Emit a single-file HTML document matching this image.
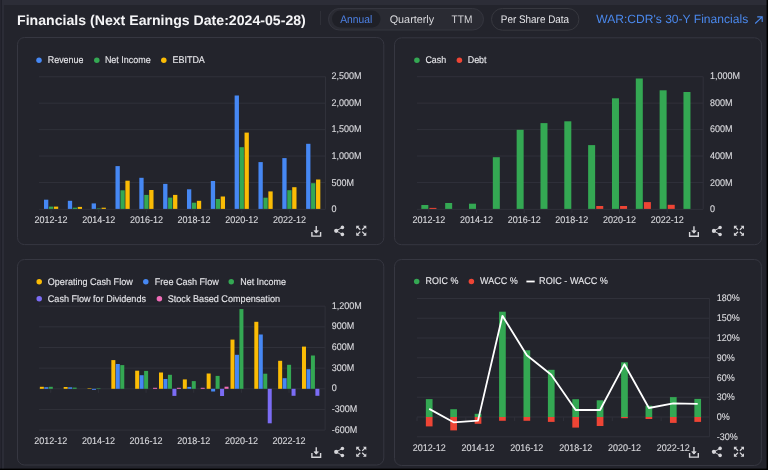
<!DOCTYPE html>
<html><head><meta charset="utf-8"><style>
html,body{margin:0;padding:0;width:768px;height:470px;overflow:hidden;background:#23242c;font-family:"Liberation Sans",sans-serif;}
</style></head><body>
<svg width="768" height="470" viewBox="0 0 768 470" style="position:absolute;left:0;top:0;will-change:transform" font-family="Liberation Sans, sans-serif" text-rendering="geometricPrecision">
<rect x="0.00" y="0.00" width="768.00" height="470.00" fill="#23242c"/>
<rect x="0.00" y="0.00" width="1.00" height="470.00" fill="#25252f"/>
<rect x="1.00" y="0.00" width="1.00" height="470.00" fill="#1f2029"/>
<rect x="2.00" y="0.00" width="765.00" height="5.00" fill="#2c2d37"/>
<rect x="2.00" y="5.00" width="2.00" height="465.00" fill="#2b2c36"/>
<rect x="766.60" y="0.00" width="1.40" height="470.00" fill="#000000"/>
<rect x="0.00" y="468.60" width="768.00" height="1.40" fill="#000000"/>
<text x="17.00" y="25.30" font-size="14" fill="#f4f4f6" text-anchor="start" font-weight="bold" textLength="288.8" lengthAdjust="spacingAndGlyphs">Financials (Next Earnings Date:2024-05-28)</text>
<line x1="320.50" y1="11.00" x2="320.50" y2="25.00" stroke="#2f3038" stroke-width="1"/>
<rect x="328.5" y="8.5" width="155" height="21.5" rx="10.75" fill="#2a2b33" stroke="#35363f" stroke-width="1"/>
<rect x="332" y="10.6" width="48.5" height="16.8" rx="8.4" fill="#1f2027"/>
<text x="340.20" y="22.50" font-size="11" fill="#4d80e4" text-anchor="start" font-weight="normal" textLength="32" lengthAdjust="spacingAndGlyphs">Annual</text>
<text x="389.70" y="22.50" font-size="11" fill="#d8d8dc" text-anchor="start" font-weight="normal" textLength="44.5" lengthAdjust="spacingAndGlyphs">Quarterly</text>
<text x="451.60" y="22.50" font-size="11" fill="#d8d8dc" text-anchor="start" font-weight="normal" textLength="20.8" lengthAdjust="spacingAndGlyphs">TTM</text>
<rect x="491.5" y="8.5" width="87.4" height="21.7" rx="10.85" fill="none" stroke="#37383f" stroke-width="1"/>
<text x="500.80" y="22.50" font-size="11" fill="#e4e4e8" text-anchor="start" font-weight="normal" textLength="68.3" lengthAdjust="spacingAndGlyphs">Per Share Data</text>
<text x="596.20" y="23.00" font-size="12" fill="#4a88ec" text-anchor="start" font-weight="normal" textLength="152" lengthAdjust="spacingAndGlyphs">WAR:CDR's 30-Y Financials</text>
<path d="M755.2 23.5 L762.2 16.9 M757.2 16.9 H762.2 V21.9" fill="none" stroke="#4a88ec" stroke-width="1.1"/>
<rect x="17.5" y="37.5" width="366.3" height="207.1" rx="7" fill="#23242c" stroke="#363741" stroke-width="1"/>
<rect x="394.5" y="37.8" width="367.1" height="206.9" rx="7" fill="#23242c" stroke="#363741" stroke-width="1"/>
<rect x="17.5" y="259.5" width="366.3" height="205.5" rx="7" fill="#23242c" stroke="#363741" stroke-width="1"/>
<rect x="394.5" y="259.5" width="366.9" height="206" rx="7" fill="#23242c" stroke="#363741" stroke-width="1"/>
<circle cx="39" cy="60.2" r="2.75" fill="#4688f4"/>
<text transform="translate(47.80,63.00) scale(0.9168,1)" x="0" y="0" font-size="9.7" fill="#e6e6ea" text-anchor="start" font-weight="normal" stroke="#e6e6ea" stroke-width="0.12">Revenue</text>
<circle cx="96.8" cy="60.2" r="2.75" fill="#34a853"/>
<text transform="translate(104.90,63.00) scale(0.9234,1)" x="0" y="0" font-size="9.7" fill="#e6e6ea" text-anchor="start" font-weight="normal" stroke="#e6e6ea" stroke-width="0.12">Net Income</text>
<circle cx="163.8" cy="60.2" r="2.75" fill="#fbbc05"/>
<text transform="translate(172.40,63.00) scale(0.9278,1)" x="0" y="0" font-size="9.7" fill="#e6e6ea" text-anchor="start" font-weight="normal" stroke="#e6e6ea" stroke-width="0.12">EBITDA</text>
<line x1="39.00" y1="76.75" x2="325.50" y2="76.75" stroke="#30313a" stroke-width="1"/>
<text transform="translate(331.50,79.25) scale(0.9278,1)" x="0" y="0" font-size="9.7" fill="#dadade" text-anchor="start" font-weight="normal" stroke="#dadade" stroke-width="0.12">2,500M</text>
<line x1="39.00" y1="103.18" x2="325.50" y2="103.18" stroke="#30313a" stroke-width="1"/>
<text transform="translate(331.50,105.83) scale(0.9278,1)" x="0" y="0" font-size="9.7" fill="#dadade" text-anchor="start" font-weight="normal" stroke="#dadade" stroke-width="0.12">2,000M</text>
<line x1="39.00" y1="129.61" x2="325.50" y2="129.61" stroke="#30313a" stroke-width="1"/>
<text transform="translate(331.50,132.41) scale(0.9278,1)" x="0" y="0" font-size="9.7" fill="#dadade" text-anchor="start" font-weight="normal" stroke="#dadade" stroke-width="0.12">1,500M</text>
<line x1="39.00" y1="156.04" x2="325.50" y2="156.04" stroke="#30313a" stroke-width="1"/>
<text transform="translate(331.50,158.99) scale(0.9278,1)" x="0" y="0" font-size="9.7" fill="#dadade" text-anchor="start" font-weight="normal" stroke="#dadade" stroke-width="0.12">1,000M</text>
<line x1="39.00" y1="182.47" x2="325.50" y2="182.47" stroke="#30313a" stroke-width="1"/>
<text transform="translate(331.50,185.57) scale(0.9278,1)" x="0" y="0" font-size="9.7" fill="#dadade" text-anchor="start" font-weight="normal" stroke="#dadade" stroke-width="0.12">500M</text>
<line x1="39.00" y1="209.40" x2="325.50" y2="209.40" stroke="#30313a" stroke-width="1"/>
<text transform="translate(331.50,212.15) scale(0.9278,1)" x="0" y="0" font-size="9.7" fill="#dadade" text-anchor="start" font-weight="normal" stroke="#dadade" stroke-width="0.12">0</text>
<line x1="325.50" y1="76.75" x2="325.50" y2="208.90" stroke="#30313a" stroke-width="1"/>
<rect x="44.00" y="199.70" width="4.30" height="9.20" fill="#4688f4"/>
<rect x="48.95" y="206.60" width="4.30" height="2.30" fill="#34a853"/>
<rect x="53.90" y="206.60" width="4.30" height="2.30" fill="#fbbc05"/>
<rect x="67.83" y="200.80" width="4.30" height="8.10" fill="#4688f4"/>
<rect x="72.78" y="207.70" width="4.30" height="1.20" fill="#34a853"/>
<rect x="77.73" y="206.90" width="4.30" height="2.00" fill="#fbbc05"/>
<rect x="91.66" y="203.40" width="4.30" height="5.50" fill="#4688f4"/>
<rect x="96.61" y="208.40" width="4.30" height="0.50" fill="#34a853"/>
<rect x="101.56" y="207.70" width="4.30" height="1.20" fill="#fbbc05"/>
<rect x="115.49" y="166.10" width="4.30" height="42.80" fill="#4688f4"/>
<rect x="120.44" y="190.30" width="4.30" height="18.60" fill="#34a853"/>
<rect x="125.39" y="180.70" width="4.30" height="28.20" fill="#fbbc05"/>
<rect x="139.32" y="177.80" width="4.30" height="31.10" fill="#4688f4"/>
<rect x="144.27" y="194.90" width="4.30" height="14.00" fill="#34a853"/>
<rect x="149.22" y="190.00" width="4.30" height="18.90" fill="#fbbc05"/>
<rect x="163.15" y="183.90" width="4.30" height="25.00" fill="#4688f4"/>
<rect x="168.10" y="197.60" width="4.30" height="11.30" fill="#34a853"/>
<rect x="173.05" y="194.90" width="4.30" height="14.00" fill="#fbbc05"/>
<rect x="186.98" y="189.30" width="4.30" height="19.60" fill="#4688f4"/>
<rect x="191.93" y="202.70" width="4.30" height="6.20" fill="#34a853"/>
<rect x="196.88" y="200.80" width="4.30" height="8.10" fill="#fbbc05"/>
<rect x="210.81" y="181.00" width="4.30" height="27.90" fill="#4688f4"/>
<rect x="215.76" y="199.00" width="4.30" height="9.90" fill="#34a853"/>
<rect x="220.71" y="196.50" width="4.30" height="12.40" fill="#fbbc05"/>
<rect x="234.64" y="95.50" width="4.30" height="113.40" fill="#4688f4"/>
<rect x="239.59" y="147.20" width="4.30" height="61.70" fill="#34a853"/>
<rect x="244.54" y="132.60" width="4.30" height="76.30" fill="#fbbc05"/>
<rect x="258.47" y="162.10" width="4.30" height="46.80" fill="#4688f4"/>
<rect x="263.42" y="197.70" width="4.30" height="11.20" fill="#34a853"/>
<rect x="268.37" y="191.40" width="4.30" height="17.50" fill="#fbbc05"/>
<rect x="282.30" y="158.10" width="4.30" height="50.80" fill="#4688f4"/>
<rect x="287.25" y="190.20" width="4.30" height="18.70" fill="#34a853"/>
<rect x="292.20" y="187.20" width="4.30" height="21.70" fill="#fbbc05"/>
<rect x="306.13" y="143.80" width="4.30" height="65.10" fill="#4688f4"/>
<rect x="311.08" y="183.20" width="4.30" height="25.70" fill="#34a853"/>
<rect x="316.03" y="179.50" width="4.30" height="29.40" fill="#fbbc05"/>
<line x1="51.10" y1="209.20" x2="51.10" y2="212.90" stroke="#30313a" stroke-width="1"/>
<text transform="translate(51.10,222.70) scale(0.9278,1)" x="0" y="0" font-size="9.7" fill="#dadade" text-anchor="middle" font-weight="normal" stroke="#dadade" stroke-width="0.12">2012-12</text>
<line x1="98.76" y1="209.20" x2="98.76" y2="212.90" stroke="#30313a" stroke-width="1"/>
<text transform="translate(98.76,222.70) scale(0.9278,1)" x="0" y="0" font-size="9.7" fill="#dadade" text-anchor="middle" font-weight="normal" stroke="#dadade" stroke-width="0.12">2014-12</text>
<line x1="146.42" y1="209.20" x2="146.42" y2="212.90" stroke="#30313a" stroke-width="1"/>
<text transform="translate(146.42,222.70) scale(0.9278,1)" x="0" y="0" font-size="9.7" fill="#dadade" text-anchor="middle" font-weight="normal" stroke="#dadade" stroke-width="0.12">2016-12</text>
<line x1="194.08" y1="209.20" x2="194.08" y2="212.90" stroke="#30313a" stroke-width="1"/>
<text transform="translate(194.08,222.70) scale(0.9278,1)" x="0" y="0" font-size="9.7" fill="#dadade" text-anchor="middle" font-weight="normal" stroke="#dadade" stroke-width="0.12">2018-12</text>
<line x1="241.74" y1="209.20" x2="241.74" y2="212.90" stroke="#30313a" stroke-width="1"/>
<text transform="translate(241.74,222.70) scale(0.9278,1)" x="0" y="0" font-size="9.7" fill="#dadade" text-anchor="middle" font-weight="normal" stroke="#dadade" stroke-width="0.12">2020-12</text>
<line x1="289.40" y1="209.20" x2="289.40" y2="212.90" stroke="#30313a" stroke-width="1"/>
<text transform="translate(289.40,222.70) scale(0.9278,1)" x="0" y="0" font-size="9.7" fill="#dadade" text-anchor="middle" font-weight="normal" stroke="#dadade" stroke-width="0.12">2022-12</text>
<g transform="translate(311.0,225.7)" fill="none" stroke="#d6d6da" stroke-width="1.4">
<path d="M0.9 6.2 V10.4 H9.6 V6.2"/>
<path d="M5.25 0.4 V7.2"/>
<path d="M3.0 5.0 L5.25 7.5 L7.5 5.0 Z" fill="#d6d6da" stroke-width="0.7"/>
<path d="M25.199999999999932 5.099999999999994 L31.39999999999993 1.6999999999999944 M25.199999999999932 5.099999999999994 L31.39999999999993 8.699999999999994" stroke-width="0.9"/>
<circle cx="25.199999999999932" cy="5.099999999999994" r="2.1" fill="#d6d6da" stroke="none"/>
<circle cx="31.39999999999993" cy="1.6999999999999944" r="1.8" fill="#d6d6da" stroke="none"/>
<circle cx="31.39999999999993" cy="8.699999999999994" r="1.8" fill="#d6d6da" stroke="none"/>
<g transform="translate(45.0,-0.20000000000001705)">
<path d="M1.2 1.2 L4.3 4.3 M9.3 1.2 L6.2 4.3 M1.2 9.2 L4.3 6.1 M9.3 9.2 L6.2 6.1" stroke-width="1.25"/>
<path d="M0.2 0.2 H3.6 L0.2 3.6 Z M10.3 0.2 H6.9 L10.3 3.6 Z M0.2 10.2 H3.6 L0.2 6.8 Z M10.3 10.2 H6.9 L10.3 6.8 Z" fill="#d6d6da" stroke="none"/>
</g>
</g>
<circle cx="416.9" cy="60.2" r="2.75" fill="#34a853"/>
<text transform="translate(425.40,63.00) scale(0.9185,1)" x="0" y="0" font-size="9.7" fill="#e6e6ea" text-anchor="start" font-weight="normal" stroke="#e6e6ea" stroke-width="0.12">Cash</text>
<circle cx="459.4" cy="60.2" r="2.75" fill="#ee4535"/>
<text transform="translate(467.70,63.00) scale(0.9224,1)" x="0" y="0" font-size="9.7" fill="#e6e6ea" text-anchor="start" font-weight="normal" stroke="#e6e6ea" stroke-width="0.12">Debt</text>
<line x1="417.00" y1="76.70" x2="703.20" y2="76.70" stroke="#30313a" stroke-width="1"/>
<text transform="translate(710.00,79.20) scale(0.9278,1)" x="0" y="0" font-size="9.7" fill="#dadade" text-anchor="start" font-weight="normal" stroke="#dadade" stroke-width="0.12">1,000M</text>
<line x1="417.00" y1="103.14" x2="703.20" y2="103.14" stroke="#30313a" stroke-width="1"/>
<text transform="translate(710.00,105.79) scale(0.9278,1)" x="0" y="0" font-size="9.7" fill="#dadade" text-anchor="start" font-weight="normal" stroke="#dadade" stroke-width="0.12">800M</text>
<line x1="417.00" y1="129.58" x2="703.20" y2="129.58" stroke="#30313a" stroke-width="1"/>
<text transform="translate(710.00,132.38) scale(0.9278,1)" x="0" y="0" font-size="9.7" fill="#dadade" text-anchor="start" font-weight="normal" stroke="#dadade" stroke-width="0.12">600M</text>
<line x1="417.00" y1="156.02" x2="703.20" y2="156.02" stroke="#30313a" stroke-width="1"/>
<text transform="translate(710.00,158.97) scale(0.9278,1)" x="0" y="0" font-size="9.7" fill="#dadade" text-anchor="start" font-weight="normal" stroke="#dadade" stroke-width="0.12">400M</text>
<line x1="417.00" y1="182.46" x2="703.20" y2="182.46" stroke="#30313a" stroke-width="1"/>
<text transform="translate(710.00,185.56) scale(0.9278,1)" x="0" y="0" font-size="9.7" fill="#dadade" text-anchor="start" font-weight="normal" stroke="#dadade" stroke-width="0.12">200M</text>
<line x1="417.00" y1="209.40" x2="703.20" y2="209.40" stroke="#30313a" stroke-width="1"/>
<text transform="translate(710.00,212.15) scale(0.9278,1)" x="0" y="0" font-size="9.7" fill="#dadade" text-anchor="start" font-weight="normal" stroke="#dadade" stroke-width="0.12">0</text>
<line x1="703.20" y1="76.70" x2="703.20" y2="208.90" stroke="#30313a" stroke-width="1"/>
<rect x="421.33" y="205.00" width="7.00" height="3.90" fill="#34a853"/>
<rect x="429.43" y="207.90" width="7.00" height="1.00" fill="#ee4535"/>
<rect x="445.16" y="203.00" width="7.00" height="5.90" fill="#34a853"/>
<rect x="468.99" y="203.70" width="7.00" height="5.20" fill="#34a853"/>
<rect x="492.82" y="157.20" width="7.00" height="51.70" fill="#34a853"/>
<rect x="516.65" y="129.80" width="7.00" height="79.10" fill="#34a853"/>
<rect x="540.48" y="123.10" width="7.00" height="85.80" fill="#34a853"/>
<rect x="564.31" y="121.30" width="7.00" height="87.60" fill="#34a853"/>
<rect x="588.14" y="145.10" width="7.00" height="63.80" fill="#34a853"/>
<rect x="596.24" y="206.00" width="7.00" height="2.90" fill="#ee4535"/>
<rect x="611.97" y="98.30" width="7.00" height="110.60" fill="#34a853"/>
<rect x="620.07" y="206.00" width="7.00" height="2.90" fill="#ee4535"/>
<rect x="635.80" y="78.50" width="7.00" height="130.40" fill="#34a853"/>
<rect x="643.90" y="202.10" width="7.00" height="6.80" fill="#ee4535"/>
<rect x="659.63" y="90.30" width="7.00" height="118.60" fill="#34a853"/>
<rect x="667.73" y="204.80" width="7.00" height="4.10" fill="#ee4535"/>
<rect x="683.46" y="92.00" width="7.00" height="116.90" fill="#34a853"/>
<line x1="428.88" y1="209.20" x2="428.88" y2="212.90" stroke="#30313a" stroke-width="1"/>
<text transform="translate(428.88,222.80) scale(0.9278,1)" x="0" y="0" font-size="9.7" fill="#dadade" text-anchor="middle" font-weight="normal" stroke="#dadade" stroke-width="0.12">2012-12</text>
<line x1="476.54" y1="209.20" x2="476.54" y2="212.90" stroke="#30313a" stroke-width="1"/>
<text transform="translate(476.54,222.80) scale(0.9278,1)" x="0" y="0" font-size="9.7" fill="#dadade" text-anchor="middle" font-weight="normal" stroke="#dadade" stroke-width="0.12">2014-12</text>
<line x1="524.20" y1="209.20" x2="524.20" y2="212.90" stroke="#30313a" stroke-width="1"/>
<text transform="translate(524.20,222.80) scale(0.9278,1)" x="0" y="0" font-size="9.7" fill="#dadade" text-anchor="middle" font-weight="normal" stroke="#dadade" stroke-width="0.12">2016-12</text>
<line x1="571.86" y1="209.20" x2="571.86" y2="212.90" stroke="#30313a" stroke-width="1"/>
<text transform="translate(571.86,222.80) scale(0.9278,1)" x="0" y="0" font-size="9.7" fill="#dadade" text-anchor="middle" font-weight="normal" stroke="#dadade" stroke-width="0.12">2018-12</text>
<line x1="619.52" y1="209.20" x2="619.52" y2="212.90" stroke="#30313a" stroke-width="1"/>
<text transform="translate(619.52,222.80) scale(0.9278,1)" x="0" y="0" font-size="9.7" fill="#dadade" text-anchor="middle" font-weight="normal" stroke="#dadade" stroke-width="0.12">2020-12</text>
<line x1="667.18" y1="209.20" x2="667.18" y2="212.90" stroke="#30313a" stroke-width="1"/>
<text transform="translate(667.18,222.80) scale(0.9278,1)" x="0" y="0" font-size="9.7" fill="#dadade" text-anchor="middle" font-weight="normal" stroke="#dadade" stroke-width="0.12">2022-12</text>
<g transform="translate(688.7,225.8)" fill="none" stroke="#d6d6da" stroke-width="1.4">
<path d="M0.9 6.2 V10.4 H9.6 V6.2"/>
<path d="M5.25 0.4 V7.2"/>
<path d="M3.0 5.0 L5.25 7.5 L7.5 5.0 Z" fill="#d6d6da" stroke-width="0.7"/>
<path d="M25.199999999999932 5.099999999999994 L31.39999999999993 1.6999999999999944 M25.199999999999932 5.099999999999994 L31.39999999999993 8.699999999999994" stroke-width="0.9"/>
<circle cx="25.199999999999932" cy="5.099999999999994" r="2.1" fill="#d6d6da" stroke="none"/>
<circle cx="31.39999999999993" cy="1.6999999999999944" r="1.8" fill="#d6d6da" stroke="none"/>
<circle cx="31.39999999999993" cy="8.699999999999994" r="1.8" fill="#d6d6da" stroke="none"/>
<g transform="translate(45.0,-0.20000000000001705)">
<path d="M1.2 1.2 L4.3 4.3 M9.3 1.2 L6.2 4.3 M1.2 9.2 L4.3 6.1 M9.3 9.2 L6.2 6.1" stroke-width="1.25"/>
<path d="M0.2 0.2 H3.6 L0.2 3.6 Z M10.3 0.2 H6.9 L10.3 3.6 Z M0.2 10.2 H3.6 L0.2 6.8 Z M10.3 10.2 H6.9 L10.3 6.8 Z" fill="#d6d6da" stroke="none"/>
</g>
</g>
<circle cx="39.2" cy="281.8" r="2.75" fill="#fbbc05"/>
<text transform="translate(47.80,284.60) scale(0.9329,1)" x="0" y="0" font-size="9.7" fill="#e6e6ea" text-anchor="start" font-weight="normal" stroke="#e6e6ea" stroke-width="0.12">Operating Cash Flow</text>
<circle cx="145.8" cy="281.8" r="2.75" fill="#4688f4"/>
<text transform="translate(154.80,284.60) scale(0.9348,1)" x="0" y="0" font-size="9.7" fill="#e6e6ea" text-anchor="start" font-weight="normal" stroke="#e6e6ea" stroke-width="0.12">Free Cash Flow</text>
<circle cx="231.25" cy="281.8" r="2.75" fill="#34a853"/>
<text transform="translate(240.20,284.60) scale(0.9234,1)" x="0" y="0" font-size="9.7" fill="#e6e6ea" text-anchor="start" font-weight="normal" stroke="#e6e6ea" stroke-width="0.12">Net Income</text>
<circle cx="39.2" cy="298.8" r="2.75" fill="#7b6cf4"/>
<text transform="translate(47.80,301.60) scale(0.9351,1)" x="0" y="0" font-size="9.7" fill="#e6e6ea" text-anchor="start" font-weight="normal" stroke="#e6e6ea" stroke-width="0.12">Cash Flow for Dividends</text>
<circle cx="159.4" cy="298.8" r="2.75" fill="#f06cb8"/>
<text transform="translate(167.70,301.60) scale(0.9398,1)" x="0" y="0" font-size="9.7" fill="#e6e6ea" text-anchor="start" font-weight="normal" stroke="#e6e6ea" stroke-width="0.12">Stock Based Compensation</text>
<line x1="39.00" y1="306.20" x2="325.10" y2="306.20" stroke="#30313a" stroke-width="1"/>
<text transform="translate(331.80,308.70) scale(0.9278,1)" x="0" y="0" font-size="9.7" fill="#dadade" text-anchor="start" font-weight="normal" stroke="#dadade" stroke-width="0.12">1,200M</text>
<line x1="39.00" y1="326.85" x2="325.10" y2="326.85" stroke="#30313a" stroke-width="1"/>
<text transform="translate(331.80,329.35) scale(0.9278,1)" x="0" y="0" font-size="9.7" fill="#dadade" text-anchor="start" font-weight="normal" stroke="#dadade" stroke-width="0.12">900M</text>
<line x1="39.00" y1="347.50" x2="325.10" y2="347.50" stroke="#30313a" stroke-width="1"/>
<text transform="translate(331.80,350.00) scale(0.9278,1)" x="0" y="0" font-size="9.7" fill="#dadade" text-anchor="start" font-weight="normal" stroke="#dadade" stroke-width="0.12">600M</text>
<line x1="39.00" y1="368.15" x2="325.10" y2="368.15" stroke="#30313a" stroke-width="1"/>
<text transform="translate(331.80,370.65) scale(0.9278,1)" x="0" y="0" font-size="9.7" fill="#dadade" text-anchor="start" font-weight="normal" stroke="#dadade" stroke-width="0.12">300M</text>
<line x1="39.00" y1="388.80" x2="325.10" y2="388.80" stroke="#30313a" stroke-width="1"/>
<text transform="translate(331.80,391.30) scale(0.9278,1)" x="0" y="0" font-size="9.7" fill="#dadade" text-anchor="start" font-weight="normal" stroke="#dadade" stroke-width="0.12">0</text>
<line x1="39.00" y1="409.45" x2="325.10" y2="409.45" stroke="#30313a" stroke-width="1"/>
<text transform="translate(331.80,411.95) scale(0.9278,1)" x="0" y="0" font-size="9.7" fill="#dadade" text-anchor="start" font-weight="normal" stroke="#dadade" stroke-width="0.12">-300M</text>
<line x1="39.00" y1="430.10" x2="325.10" y2="430.10" stroke="#30313a" stroke-width="1"/>
<text transform="translate(331.80,432.60) scale(0.9278,1)" x="0" y="0" font-size="9.7" fill="#dadade" text-anchor="start" font-weight="normal" stroke="#dadade" stroke-width="0.12">-600M</text>
<line x1="325.10" y1="306.20" x2="325.10" y2="430.10" stroke="#30313a" stroke-width="1"/>
<rect x="39.85" y="386.80" width="4.00" height="2.00" fill="#fbbc05"/>
<rect x="44.32" y="387.20" width="4.00" height="1.60" fill="#4688f4"/>
<rect x="48.79" y="386.80" width="4.00" height="2.00" fill="#34a853"/>
<rect x="63.68" y="387.00" width="4.00" height="1.80" fill="#fbbc05"/>
<rect x="68.15" y="387.30" width="4.00" height="1.50" fill="#4688f4"/>
<rect x="72.62" y="387.60" width="4.00" height="1.20" fill="#34a853"/>
<rect x="87.51" y="388.30" width="4.00" height="0.50" fill="#fbbc05"/>
<rect x="91.98" y="388.80" width="4.00" height="1.00" fill="#4688f4"/>
<rect x="96.45" y="388.30" width="4.00" height="0.50" fill="#34a853"/>
<rect x="111.34" y="360.10" width="4.00" height="28.70" fill="#fbbc05"/>
<rect x="115.81" y="364.00" width="4.00" height="24.80" fill="#4688f4"/>
<rect x="120.28" y="365.10" width="4.00" height="23.70" fill="#34a853"/>
<rect x="135.17" y="370.70" width="4.00" height="18.10" fill="#fbbc05"/>
<rect x="139.64" y="375.20" width="4.00" height="13.60" fill="#4688f4"/>
<rect x="144.11" y="370.90" width="4.00" height="17.90" fill="#34a853"/>
<rect x="153.05" y="387.80" width="4.00" height="1.00" fill="#f06cb8"/>
<rect x="159.00" y="372.50" width="4.00" height="16.30" fill="#fbbc05"/>
<rect x="163.47" y="379.00" width="4.00" height="9.80" fill="#4688f4"/>
<rect x="167.94" y="374.80" width="4.00" height="14.00" fill="#34a853"/>
<rect x="172.41" y="388.80" width="4.00" height="7.10" fill="#7b6cf4"/>
<rect x="176.88" y="387.80" width="4.00" height="1.00" fill="#f06cb8"/>
<rect x="182.83" y="379.40" width="4.00" height="9.40" fill="#fbbc05"/>
<rect x="187.30" y="386.90" width="4.00" height="1.90" fill="#4688f4"/>
<rect x="191.77" y="381.10" width="4.00" height="7.70" fill="#34a853"/>
<rect x="200.71" y="387.80" width="4.00" height="1.00" fill="#f06cb8"/>
<rect x="206.66" y="373.50" width="4.00" height="15.30" fill="#fbbc05"/>
<rect x="211.13" y="388.80" width="4.00" height="2.70" fill="#4688f4"/>
<rect x="215.60" y="375.90" width="4.00" height="12.90" fill="#34a853"/>
<rect x="220.07" y="388.80" width="4.00" height="7.20" fill="#7b6cf4"/>
<rect x="224.54" y="386.70" width="4.00" height="2.10" fill="#f06cb8"/>
<rect x="230.49" y="339.60" width="4.00" height="49.20" fill="#fbbc05"/>
<rect x="234.96" y="354.80" width="4.00" height="34.00" fill="#4688f4"/>
<rect x="239.43" y="309.10" width="4.00" height="79.70" fill="#34a853"/>
<rect x="254.32" y="321.80" width="4.00" height="67.00" fill="#fbbc05"/>
<rect x="258.79" y="334.50" width="4.00" height="54.30" fill="#4688f4"/>
<rect x="263.26" y="373.70" width="4.00" height="15.10" fill="#34a853"/>
<rect x="267.73" y="388.80" width="4.00" height="34.50" fill="#7b6cf4"/>
<rect x="278.15" y="360.80" width="4.00" height="28.00" fill="#fbbc05"/>
<rect x="282.62" y="378.20" width="4.00" height="10.60" fill="#4688f4"/>
<rect x="287.09" y="364.80" width="4.00" height="24.00" fill="#34a853"/>
<rect x="291.56" y="388.80" width="4.00" height="7.00" fill="#7b6cf4"/>
<rect x="301.98" y="346.60" width="4.00" height="42.20" fill="#fbbc05"/>
<rect x="306.45" y="369.20" width="4.00" height="19.60" fill="#4688f4"/>
<rect x="310.92" y="355.50" width="4.00" height="33.30" fill="#34a853"/>
<rect x="315.39" y="388.80" width="4.00" height="7.00" fill="#7b6cf4"/>
<line x1="50.75" y1="389.10" x2="50.75" y2="392.80" stroke="#30313a" stroke-width="1"/>
<text transform="translate(50.75,444.40) scale(0.9278,1)" x="0" y="0" font-size="9.7" fill="#dadade" text-anchor="middle" font-weight="normal" stroke="#dadade" stroke-width="0.12">2012-12</text>
<line x1="98.41" y1="389.10" x2="98.41" y2="392.80" stroke="#30313a" stroke-width="1"/>
<text transform="translate(98.41,444.40) scale(0.9278,1)" x="0" y="0" font-size="9.7" fill="#dadade" text-anchor="middle" font-weight="normal" stroke="#dadade" stroke-width="0.12">2014-12</text>
<line x1="146.07" y1="389.10" x2="146.07" y2="392.80" stroke="#30313a" stroke-width="1"/>
<text transform="translate(146.07,444.40) scale(0.9278,1)" x="0" y="0" font-size="9.7" fill="#dadade" text-anchor="middle" font-weight="normal" stroke="#dadade" stroke-width="0.12">2016-12</text>
<line x1="193.73" y1="389.10" x2="193.73" y2="392.80" stroke="#30313a" stroke-width="1"/>
<text transform="translate(193.73,444.40) scale(0.9278,1)" x="0" y="0" font-size="9.7" fill="#dadade" text-anchor="middle" font-weight="normal" stroke="#dadade" stroke-width="0.12">2018-12</text>
<line x1="241.39" y1="389.10" x2="241.39" y2="392.80" stroke="#30313a" stroke-width="1"/>
<text transform="translate(241.39,444.40) scale(0.9278,1)" x="0" y="0" font-size="9.7" fill="#dadade" text-anchor="middle" font-weight="normal" stroke="#dadade" stroke-width="0.12">2020-12</text>
<line x1="289.05" y1="389.10" x2="289.05" y2="392.80" stroke="#30313a" stroke-width="1"/>
<text transform="translate(289.05,444.40) scale(0.9278,1)" x="0" y="0" font-size="9.7" fill="#dadade" text-anchor="middle" font-weight="normal" stroke="#dadade" stroke-width="0.12">2022-12</text>
<g transform="translate(311.0,446.8)" fill="none" stroke="#d6d6da" stroke-width="1.4">
<path d="M0.9 6.2 V10.4 H9.6 V6.2"/>
<path d="M5.25 0.4 V7.2"/>
<path d="M3.0 5.0 L5.25 7.5 L7.5 5.0 Z" fill="#d6d6da" stroke-width="0.7"/>
<path d="M25.199999999999932 5.099999999999994 L31.39999999999993 1.6999999999999944 M25.199999999999932 5.099999999999994 L31.39999999999993 8.699999999999994" stroke-width="0.9"/>
<circle cx="25.199999999999932" cy="5.099999999999994" r="2.1" fill="#d6d6da" stroke="none"/>
<circle cx="31.39999999999993" cy="1.6999999999999944" r="1.8" fill="#d6d6da" stroke="none"/>
<circle cx="31.39999999999993" cy="8.699999999999994" r="1.8" fill="#d6d6da" stroke="none"/>
<g transform="translate(45.0,-0.20000000000001705)">
<path d="M1.2 1.2 L4.3 4.3 M9.3 1.2 L6.2 4.3 M1.2 9.2 L4.3 6.1 M9.3 9.2 L6.2 6.1" stroke-width="1.25"/>
<path d="M0.2 0.2 H3.6 L0.2 3.6 Z M10.3 0.2 H6.9 L10.3 3.6 Z M0.2 10.2 H3.6 L0.2 6.8 Z M10.3 10.2 H6.9 L10.3 6.8 Z" fill="#d6d6da" stroke="none"/>
</g>
</g>
<circle cx="416.7" cy="281.5" r="2.75" fill="#34a853"/>
<text transform="translate(425.60,284.30) scale(0.9221,1)" x="0" y="0" font-size="9.7" fill="#e6e6ea" text-anchor="start" font-weight="normal" stroke="#e6e6ea" stroke-width="0.12">ROIC %</text>
<circle cx="471.4" cy="281.5" r="2.75" fill="#ee4535"/>
<text transform="translate(480.10,284.30) scale(0.9287,1)" x="0" y="0" font-size="9.7" fill="#e6e6ea" text-anchor="start" font-weight="normal" stroke="#e6e6ea" stroke-width="0.12">WACC %</text>
<rect x="526.4" y="280.6" width="8.300000000000068" height="1.8" fill="#ffffff"/>
<text transform="translate(539.10,284.30) scale(0.9379,1)" x="0" y="0" font-size="9.7" fill="#e6e6ea" text-anchor="start" font-weight="normal" stroke="#e6e6ea" stroke-width="0.12">ROIC - WACC %</text>
<line x1="417.00" y1="298.50" x2="709.60" y2="298.50" stroke="#30313a" stroke-width="1"/>
<text transform="translate(716.80,301.00) scale(0.9278,1)" x="0" y="0" font-size="9.7" fill="#dadade" text-anchor="start" font-weight="normal" stroke="#dadade" stroke-width="0.12">180%</text>
<line x1="417.00" y1="318.25" x2="709.60" y2="318.25" stroke="#30313a" stroke-width="1"/>
<text transform="translate(716.80,320.89) scale(0.9278,1)" x="0" y="0" font-size="9.7" fill="#dadade" text-anchor="start" font-weight="normal" stroke="#dadade" stroke-width="0.12">150%</text>
<line x1="417.00" y1="338.00" x2="709.60" y2="338.00" stroke="#30313a" stroke-width="1"/>
<text transform="translate(716.80,340.78) scale(0.9278,1)" x="0" y="0" font-size="9.7" fill="#dadade" text-anchor="start" font-weight="normal" stroke="#dadade" stroke-width="0.12">120%</text>
<line x1="417.00" y1="357.75" x2="709.60" y2="357.75" stroke="#30313a" stroke-width="1"/>
<text transform="translate(716.80,360.67) scale(0.9278,1)" x="0" y="0" font-size="9.7" fill="#dadade" text-anchor="start" font-weight="normal" stroke="#dadade" stroke-width="0.12">90%</text>
<line x1="417.00" y1="377.50" x2="709.60" y2="377.50" stroke="#30313a" stroke-width="1"/>
<text transform="translate(716.80,380.56) scale(0.9278,1)" x="0" y="0" font-size="9.7" fill="#dadade" text-anchor="start" font-weight="normal" stroke="#dadade" stroke-width="0.12">60%</text>
<line x1="417.00" y1="397.25" x2="709.60" y2="397.25" stroke="#30313a" stroke-width="1"/>
<text transform="translate(716.80,400.45) scale(0.9278,1)" x="0" y="0" font-size="9.7" fill="#dadade" text-anchor="start" font-weight="normal" stroke="#dadade" stroke-width="0.12">30%</text>
<line x1="417.00" y1="417.00" x2="709.60" y2="417.00" stroke="#30313a" stroke-width="1"/>
<text transform="translate(716.80,420.34) scale(0.9278,1)" x="0" y="0" font-size="9.7" fill="#dadade" text-anchor="start" font-weight="normal" stroke="#dadade" stroke-width="0.12">0%</text>
<line x1="417.00" y1="436.75" x2="709.60" y2="436.75" stroke="#30313a" stroke-width="1"/>
<text transform="translate(716.80,440.23) scale(0.9278,1)" x="0" y="0" font-size="9.7" fill="#dadade" text-anchor="start" font-weight="normal" stroke="#dadade" stroke-width="0.12">-30%</text>
<line x1="709.60" y1="298.50" x2="709.60" y2="436.75" stroke="#30313a" stroke-width="1"/>
<rect x="425.85" y="399.10" width="6.70" height="17.90" fill="#34a853"/>
<rect x="425.85" y="417.00" width="6.70" height="9.40" fill="#ee4535"/>
<rect x="450.26" y="409.20" width="6.70" height="7.80" fill="#34a853"/>
<rect x="450.26" y="417.00" width="6.70" height="13.40" fill="#ee4535"/>
<rect x="474.67" y="413.80" width="6.70" height="3.20" fill="#34a853"/>
<rect x="474.67" y="417.00" width="6.70" height="6.80" fill="#ee4535"/>
<rect x="499.08" y="311.70" width="6.70" height="105.30" fill="#34a853"/>
<rect x="499.08" y="417.00" width="6.70" height="3.80" fill="#ee4535"/>
<rect x="523.49" y="350.30" width="6.70" height="66.70" fill="#34a853"/>
<rect x="523.49" y="417.00" width="6.70" height="3.80" fill="#ee4535"/>
<rect x="547.90" y="369.80" width="6.70" height="47.20" fill="#34a853"/>
<rect x="547.90" y="417.00" width="6.70" height="4.90" fill="#ee4535"/>
<rect x="572.31" y="399.20" width="6.70" height="17.80" fill="#34a853"/>
<rect x="572.31" y="417.00" width="6.70" height="10.60" fill="#ee4535"/>
<rect x="596.72" y="400.30" width="6.70" height="16.70" fill="#34a853"/>
<rect x="596.72" y="417.00" width="6.70" height="9.00" fill="#ee4535"/>
<rect x="621.13" y="362.30" width="6.70" height="54.70" fill="#34a853"/>
<rect x="621.13" y="417.00" width="6.70" height="1.20" fill="#ee4535"/>
<rect x="645.54" y="405.70" width="6.70" height="11.30" fill="#34a853"/>
<rect x="645.54" y="417.00" width="6.70" height="2.00" fill="#ee4535"/>
<rect x="669.95" y="397.10" width="6.70" height="19.90" fill="#34a853"/>
<rect x="669.95" y="417.00" width="6.70" height="5.90" fill="#ee4535"/>
<rect x="694.36" y="398.90" width="6.70" height="18.10" fill="#34a853"/>
<rect x="694.36" y="417.00" width="6.70" height="4.90" fill="#ee4535"/>
<line x1="417.00" y1="417.30" x2="417.00" y2="421.00" stroke="#30313a" stroke-width="1"/>
<text transform="translate(429.20,450.90) scale(0.9278,1)" x="0" y="0" font-size="9.7" fill="#dadade" text-anchor="middle" font-weight="normal" stroke="#dadade" stroke-width="0.12">2012-12</text>
<line x1="465.82" y1="417.30" x2="465.82" y2="421.00" stroke="#30313a" stroke-width="1"/>
<text transform="translate(478.02,450.90) scale(0.9278,1)" x="0" y="0" font-size="9.7" fill="#dadade" text-anchor="middle" font-weight="normal" stroke="#dadade" stroke-width="0.12">2014-12</text>
<line x1="514.64" y1="417.30" x2="514.64" y2="421.00" stroke="#30313a" stroke-width="1"/>
<text transform="translate(526.84,450.90) scale(0.9278,1)" x="0" y="0" font-size="9.7" fill="#dadade" text-anchor="middle" font-weight="normal" stroke="#dadade" stroke-width="0.12">2016-12</text>
<line x1="563.46" y1="417.30" x2="563.46" y2="421.00" stroke="#30313a" stroke-width="1"/>
<text transform="translate(575.66,450.90) scale(0.9278,1)" x="0" y="0" font-size="9.7" fill="#dadade" text-anchor="middle" font-weight="normal" stroke="#dadade" stroke-width="0.12">2018-12</text>
<line x1="612.28" y1="417.30" x2="612.28" y2="421.00" stroke="#30313a" stroke-width="1"/>
<text transform="translate(624.48,450.90) scale(0.9278,1)" x="0" y="0" font-size="9.7" fill="#dadade" text-anchor="middle" font-weight="normal" stroke="#dadade" stroke-width="0.12">2020-12</text>
<line x1="661.10" y1="417.30" x2="661.10" y2="421.00" stroke="#30313a" stroke-width="1"/>
<text transform="translate(673.30,450.90) scale(0.9278,1)" x="0" y="0" font-size="9.7" fill="#dadade" text-anchor="middle" font-weight="normal" stroke="#dadade" stroke-width="0.12">2022-12</text>
<polyline points="429.20,408.90 453.61,422.30 478.02,420.60 502.43,315.80 526.84,355.30 551.25,374.70 575.66,410.00 600.07,410.00 624.48,364.20 648.89,408.00 673.30,403.30 697.71,403.90" fill="none" stroke="#ffffff" stroke-width="1.8" stroke-linejoin="round"/>
<g transform="translate(688.7,446.7)" fill="none" stroke="#d6d6da" stroke-width="1.4">
<path d="M0.9 6.2 V10.4 H9.6 V6.2"/>
<path d="M5.25 0.4 V7.2"/>
<path d="M3.0 5.0 L5.25 7.5 L7.5 5.0 Z" fill="#d6d6da" stroke-width="0.7"/>
<path d="M25.199999999999932 5.099999999999994 L31.39999999999993 1.6999999999999944 M25.199999999999932 5.099999999999994 L31.39999999999993 8.699999999999994" stroke-width="0.9"/>
<circle cx="25.199999999999932" cy="5.099999999999994" r="2.1" fill="#d6d6da" stroke="none"/>
<circle cx="31.39999999999993" cy="1.6999999999999944" r="1.8" fill="#d6d6da" stroke="none"/>
<circle cx="31.39999999999993" cy="8.699999999999994" r="1.8" fill="#d6d6da" stroke="none"/>
<g transform="translate(45.0,-0.20000000000001705)">
<path d="M1.2 1.2 L4.3 4.3 M9.3 1.2 L6.2 4.3 M1.2 9.2 L4.3 6.1 M9.3 9.2 L6.2 6.1" stroke-width="1.25"/>
<path d="M0.2 0.2 H3.6 L0.2 3.6 Z M10.3 0.2 H6.9 L10.3 3.6 Z M0.2 10.2 H3.6 L0.2 6.8 Z M10.3 10.2 H6.9 L10.3 6.8 Z" fill="#d6d6da" stroke="none"/>
</g>
</g>
</svg>
</body></html>
